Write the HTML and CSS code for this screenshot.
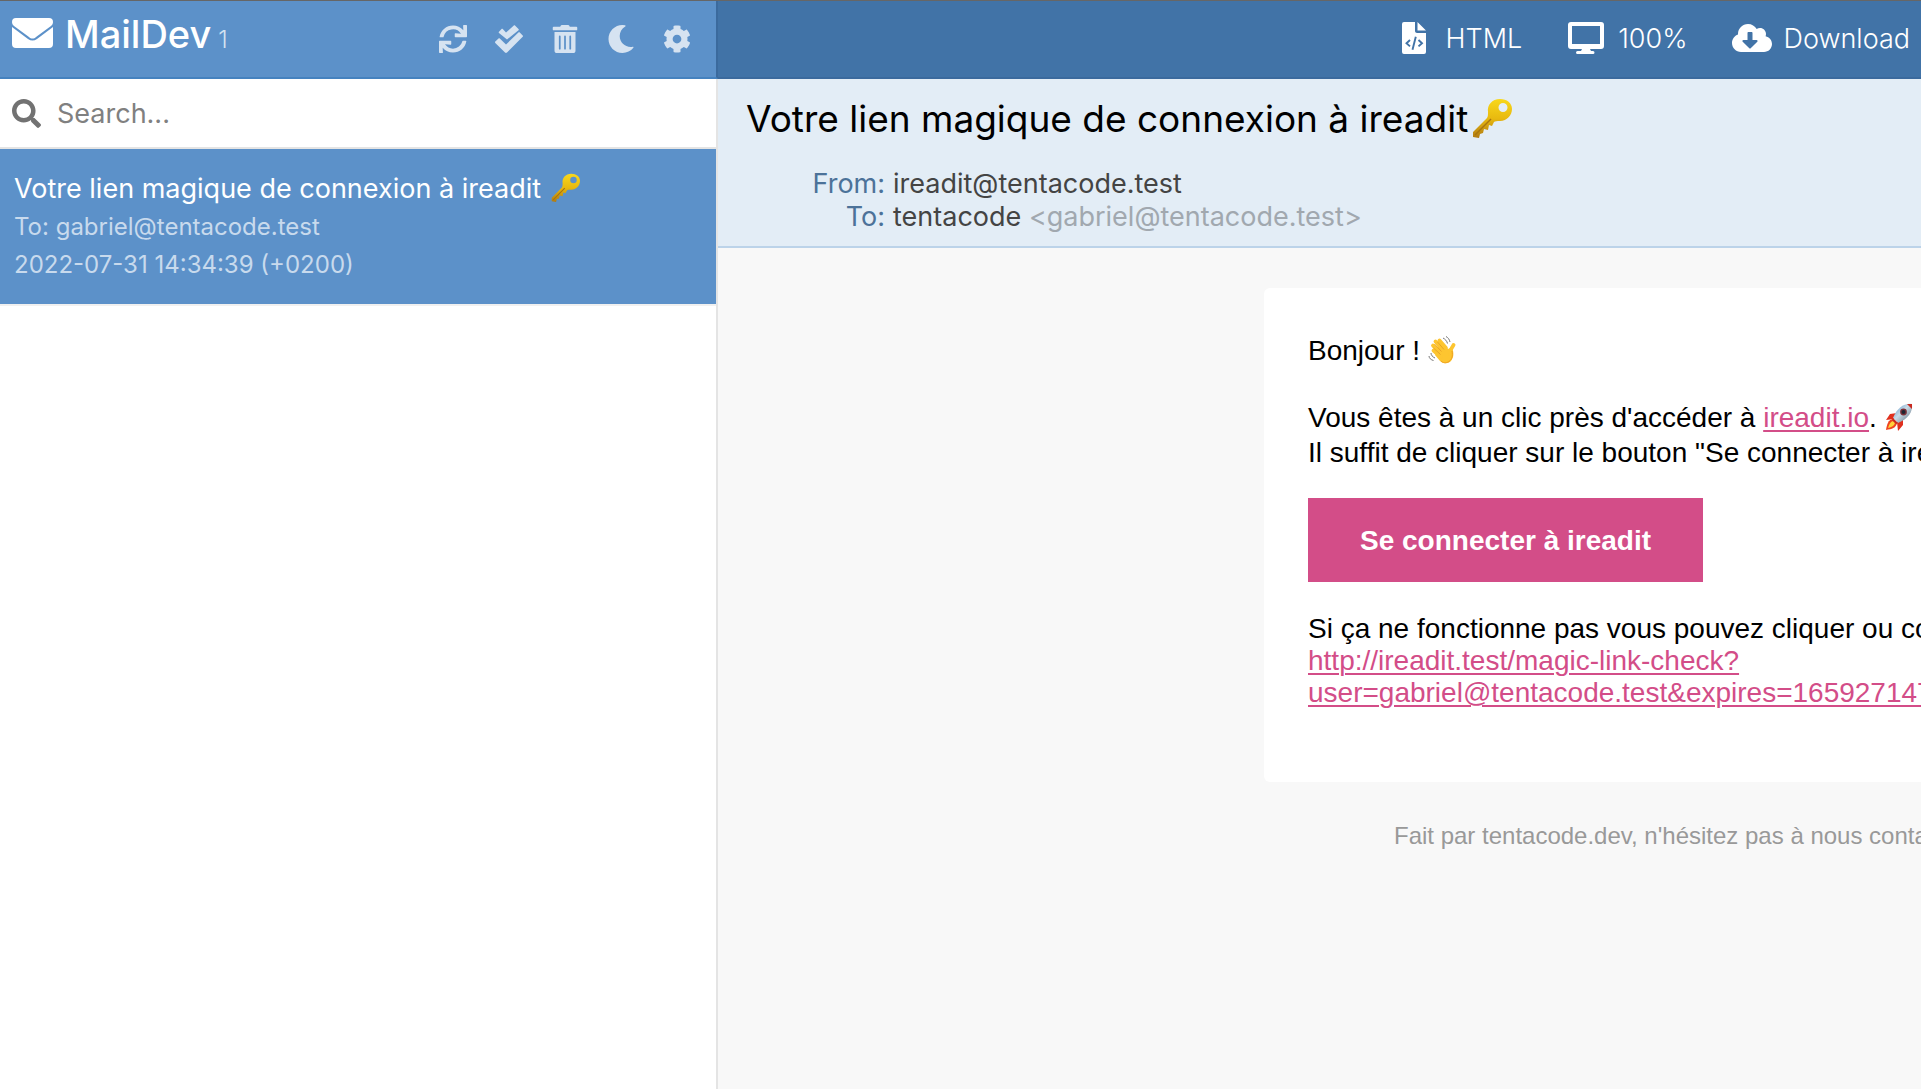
FILE: index.html
```html
<!DOCTYPE html>
<html lang="fr">
<head>
<meta charset="utf-8">
<title>MailDev</title>
<link rel="stylesheet" href="styles.css">
</head>
<body>
<svg class="sprite" aria-hidden="true">
  <defs>
    <linearGradient id="gold" x1="0" y1="0" x2="0" y2="1">
      <stop offset="0" stop-color="#f8d81c"/><stop offset="0.5" stop-color="#e8b90f"/><stop offset="1" stop-color="#b07a12"/>
    </linearGradient>
    <linearGradient id="hull" x1="0" y1="0" x2="1" y2="1">
      <stop offset="0" stop-color="#4d8fc4"/><stop offset="0.45" stop-color="#c9dbe8"/><stop offset="1" stop-color="#5a6b78"/>
    </linearGradient>
    <symbol id="key" viewBox="0 0 40 40">
      <path fill="url(#gold)" fill-rule="evenodd" d="M28 1C20 1 15 7 16 14c0 3 0 4-1 6L1 34v5l6 1 1-4 3-1 1-4 4 1 1-5 3 1 2-4c1-1 3-1 6-1 7 0 12-6 12-12S35 1 28 1zm3 4a4.500 4.500 0 1 1 0 9 4.500 4.500 0 0 1 0-9z"/>
      <path d="M3 37L19 21" fill="none" stroke="#a8740e" stroke-width="1.500"/>
    </symbol>
    <symbol id="wave" viewBox="0 0 28 28">
      <path fill="#fdc530" d="M10 11L20 13l4-2c2 6 2 10-1 14-3 3-8 3-11 0L7 19z"/>
      <g fill="none" stroke="#fdc530" stroke-width="3.800" stroke-linecap="round">
        <path d="M18 12L11.500 4.500M15 14L7.500 5.500M13 17L5 9.500M13 21L5.500 14.500"/>
        <path d="M22 18c-.5-4 1.500-5 3.500-9"/>
      </g>
      <path d="M16 13.500L9.500 6M13.500 15.500L6.500 8M12.500 18.500L5.500 12" fill="none" stroke="#df9722" stroke-width="0.700"/>
      <path d="M24 15c1 5 0 8-3 10.500-3 2-6 1.500-8-.5" fill="none" stroke="#eda023" stroke-width="1"/>
      <path d="M15 2c2 1 4 3 4.500 5.500M18 .5c2 1 3.500 3 4 5.500M1 20c0 2 2 4 4.500 4.500M3 17c0 2 1.500 4 4 5" fill="none" stroke="#777" stroke-width="1"/>
    </symbol>
    <symbol id="rocket" viewBox="0 0 28 28">
      <path fill="#e0301e" d="M12 10L5 11 1 17l8-1zM18 16l0 6-5 6-1-9z"/>
      <path fill="#f0441f" d="M8 16c-5 1-6 5-7 11 6-1 10-2 11-7z"/>
      <path fill="#ffd23a" d="M8 18c-3 1-4 4-5 7 4-1 6-2 7-5z"/>
      <path fill="url(#hull)" d="M27 1c-8-1-15 4-19 14l5 5C23 16 28 9 27 1z"/>
      <path fill="#c92a20" d="M27 1l-5 0 5 5zM8 15l5 5-2 1-4-4z"/>
      <circle cx="18.500" cy="9" r="3.400" fill="#7a3038"/><circle cx="18.500" cy="9" r="2" fill="#1d2430"/>
    </symbol>
  </defs>
</svg>
<div class="app">
  <aside class="sidebar">
    <header class="sidebar-header">
      <h1 class="brand">
        <svg class="brand-icon" viewBox="0 0 41 30" aria-hidden="true"><path fill="currentColor" d="M4 0h33a4 4 0 0 1 4 4c0 2-1 3-2 4L24 19c-2 2-5 2-7 0L2 8C1 7 0 6 0 4a4 4 0 0 1 4-4zM0 9l16 12c3 2 6 2 9 0L41 9v17a4 4 0 0 1-4 4H4a4 4 0 0 1-4-4z"/></svg>
        <span>MailDev</span>
        <span class="count">1</span>
      </h1>
      <nav class="tools">
        <button class="tool" aria-label="Refresh"><svg viewBox="0 0 512 512"><path d="M440.650 12.570l4 82.770A247.160 247.160 0 0 0 255.830 8C134.730 8 33.910 94.920 12.290 209.820A12 12 0 0 0 24.090 224h49.050a12 12 0 0 0 11.670-9.260 175.910 175.910 0 0 1 317-56.940l-101.460-4.860a12 12 0 0 0-12.570 12v47.410a12 12 0 0 0 12 12H500a12 12 0 0 0 12-12V12a12 12 0 0 0-12-12h-47.370a12 12 0 0 0-11.980 12.570zM255.830 432a175.610 175.610 0 0 1-146-77.800l101.800 4.870a12 12 0 0 0 12.570-12v-47.400a12 12 0 0 0-12-12H12a12 12 0 0 0-12 12V500a12 12 0 0 0 12 12h47.350a12 12 0 0 0 12-12.600l-4.150-82.570A247.170 247.170 0 0 0 255.830 504c121.110 0 221.930-86.920 243.550-201.820a12 12 0 0 0-11.800-14.180h-49.050a12 12 0 0 0-11.670 9.260A175.860 175.860 0 0 1 255.830 432z"/></svg></button>
        <button class="tool" aria-label="Mark all as read"><svg viewBox="0 0 28 28"><path d="M20 .5l3.500 3.500c.4.400.4.900 0 1.300L12 14.500 4 8c-.4-.4-.4-.8 0-1.200L6.500 4c.4-.4.900-.4 1.300 0L11 7.500 18.800.5c.4-.4.800-.4 1.200 0zM24.800 7.500L27.700 10.500c.4.400.4.900 0 1.300L12 27.500c-.7.600-1.400.6-2 0L.3 18c-.4-.5-.4-1 0-1.400L3.500 13.500c.4-.4.900-.4 1.300 0L11 19.500 23.400 7.500c.5-.4 1-.4 1.400 0z"/></svg></button>
        <button class="tool" aria-label="Delete all"><svg viewBox="-32 0 512 512"><path d="M32 464a48 48 0 0 0 48 48h288a48 48 0 0 0 48-48V128H32zm272-256a16 16 0 0 1 32 0v224a16 16 0 0 1-32 0zm-96 0a16 16 0 0 1 32 0v224a16 16 0 0 1-32 0zm-96 0a16 16 0 0 1 32 0v224a16 16 0 0 1-32 0zM432 32H312l-9.400-18.700A24 24 0 0 0 281.100 0H166.800a23.720 23.720 0 0 0-21.400 13.300L136 32H16A16 16 0 0 0 0 48v32a16 16 0 0 0 16 16h416a16 16 0 0 0 16-16V48a16 16 0 0 0-16-16z"/></svg></button>
        <button class="tool" aria-label="Dark mode"><svg viewBox="0 0 512 512"><path d="M283.211 512c78.962 0 151.079-35.925 198.857-94.792 7.068-8.708-.639-21.430-11.562-19.350-124.203 23.654-238.262-71.576-238.262-196.954 0-72.222 38.662-138.635 101.498-174.394 9.686-5.512 7.250-20.197-3.756-22.230A258.156 258.156 0 0 0 283.211 0c-141.309 0-256 114.511-256 256 0 141.309 114.511 256 256 256z"/></svg></button>
        <button class="tool" aria-label="Settings"><svg viewBox="0 0 512 512"><path d="M487.400 315.700l-42.600-24.600c4.300-23.200 4.300-47 0-70.200l42.600-24.600c4.900-2.800 7.100-8.600 5.500-14-11.100-35.600-30-67.800-54.700-94.600-3.800-4.100-10-5.100-14.800-2.300L380.800 110c-17.900-15.400-38.500-27.300-60.800-35.100V25.800c0-5.600-3.900-10.500-9.400-11.700-36.700-8.200-74.300-7.800-109.200 0-5.500 1.200-9.400 6.100-9.400 11.700V75c-22.200 7.900-42.800 19.800-60.800 35.100L88.700 85.500c-4.900-2.800-11-1.900-14.800 2.300-24.700 26.700-43.600 58.900-54.700 94.600-1.700 5.400.6 11.200 5.500 14L67.300 221c-4.300 23.200-4.300 47 0 70.200l-42.600 24.600c-4.900 2.800-7.100 8.600-5.500 14 11.100 35.600 30 67.800 54.700 94.600 3.800 4.100 10 5.100 14.800 2.300l42.600-24.600c17.900 15.400 38.500 27.300 60.800 35.100v49.200c0 5.600 3.900 10.500 9.400 11.700 36.700 8.200 74.300 7.800 109.200 0 5.500-1.200 9.400-6.100 9.400-11.700v-49.200c22.200-7.900 42.800-19.800 60.800-35.100l42.600 24.600c4.900 2.800 11 1.900 14.800-2.300 24.700-26.700 43.600-58.900 54.700-94.600 1.500-5.500-.7-11.300-5.600-14.100zM256 336c-44.100 0-80-35.900-80-80s35.900-80 80-80 80 35.900 80 80-35.900 80-80 80z"/></svg></button>
      </nav>
    </header>
    <label class="search">
      <svg class="search-icon" viewBox="0 0 512 512" aria-hidden="true"><path fill="currentColor" d="M505 442.700L405.300 343c-4.500-4.500-10.600-7-17-7H372c27.600-35.300 44-79.700 44-128C416 93.100 322.900 0 208 0S0 93.100 0 208s93.100 208 208 208c48.300 0 92.700-16.400 128-44v16.300c0 6.400 2.500 12.500 7 17l99.700 99.700c9.400 9.400 24.600 9.400 33.900 0l28.300-28.300c9.400-9.400 9.400-24.600.1-34zM208 336c-70.700 0-128-57.200-128-128 0-70.700 57.200-128 128-128 70.700 0 128 57.200 128 128 0 70.700-57.200 128-128 128z"/></svg>
      <input class="search-input" type="text" placeholder="Search..." aria-label="Search">
    </label>
    <a class="mail" href="#message">
      <span class="mail-title">Votre lien magique de connexion à ireadit <svg class="mail-emoji" role="img" aria-label="key"><use href="#key"/></svg></span>
      <span class="mail-meta">To: gabriel@tentacode.test</span>
      <span class="mail-meta">2022-07-31 14:34:39 (+0200)</span>
    </a>
  </aside>
  <main class="main" id="message">
    <nav class="toolbar">
      <button class="action"><svg viewBox="0 0 40 32"><path fill="currentColor" fill-rule="evenodd" d="M10 0h11v9c0 1 1 2 2 2h9v19a2 2 0 0 1-2 2H10a2 2 0 0 1-2-2V2a2 2 0 0 1 2-2zM23.500 0L32 8.500h-8.500z"/><path d="M16 18l-3.500 3.200 3.500 3.200M24.500 18l3.500 3.200-3.500 3.200M21.800 14.800l-3.300 13" fill="none" stroke="#4173a7" stroke-width="1.900"/></svg>HTML</button>
      <button class="action"><svg viewBox="0 0 40 32"><path fill="currentColor" fill-rule="evenodd" d="M5 0h30a3 3 0 0 1 3 3v21a3 3 0 0 1-3 3H24l1 2h2a1.500 1.500 0 0 1 0 3H11.500a1.500 1.500 0 0 1 0-3H15l1-2H5a3 3 0 0 1-3-3V3a3 3 0 0 1 3-3zM6 4v18h28V4z"/></svg>100%</button>
      <button class="action"><svg viewBox="0 0 640 512"><path fill="currentColor" d="M537.600 226.600c4.100-10.700 6.400-22.400 6.400-34.600 0-53-43-96-96-96-19.700 0-38.100 6-53.300 16.200C367 64.200 315.300 32 256 32c-88.400 0-160 71.600-160 160 0 2.700.1 5.400.2 8.100C40.200 219.800 0 273.200 0 336c0 79.500 64.500 144 144 144h368c70.700 0 128-57.300 128-128 0-61.900-44-113.600-102.400-125.400zm-132.900 88.700L299.300 420.700c-6.200 6.200-16.400 6.200-22.600 0L171.300 315.300c-10.100-10.100-2.900-27.300 11.300-27.300H248V176c0-8.800 7.200-16 16-16h48c8.800 0 16 7.200 16 16v112h65.400c14.200 0 21.400 17.200 11.300 27.300z"/></svg>Download</button>
    </nav>
    <header class="message-header">
      <h2 class="subject">Votre lien magique de connexion à ireadit<svg class="subject-emoji" role="img" aria-label="key"><use href="#key"/></svg></h2>
      <dl class="fields">
        <dt>From:</dt><dd>ireadit@tentacode.test</dd>
        <dt>To:</dt><dd>tentacode <span class="address">&lt;gabriel@tentacode.test&gt;</span></dd>
      </dl>
    </header>
    <div class="message-body">
      <article class="card">
        <p class="greeting">Bonjour ! <svg class="emoji" role="img" aria-label="wave"><use href="#wave"/></svg></p>
        <p class="intro">Vous êtes à un clic près d'accéder à <a href="#ireadit">ireadit.io</a>. <svg class="emoji" role="img" aria-label="rocket"><use href="#rocket"/></svg><br>Il suffit de cliquer sur le bouton "Se connecter à ireadit".</p>
        <a class="cta" href="#connect">Se connecter à ireadit</a>
        <p class="fallback">Si ça ne fonctionne pas vous pouvez cliquer ou copier<br><a href="#check">http://ireadit.test/magic-link-check?<br>user=gabriel@tentacode.test&amp;expires=1659271479</a></p>
      </article>
      <footer class="credits">Fait par tentacode.dev, n'hésitez pas à nous contacter</footer>
    </div>
  </main>
</div>
</body>
</html>
```
FILE: styles.css
```css
* { box-sizing: border-box; }
body, h1, h2, p, dl, dd { margin: 0; }
body {
  font-family: Inter, "Liberation Sans", sans-serif;
  font-size: 27px;
  background: #fff;
}
button { border: 0; padding: 0; background: none; font: inherit; color: inherit; }
.sprite { position: absolute; width: 0; height: 0; }

.app {
  display: grid;
  grid-template-columns: 718px minmax(0, 1fr);
  min-height: 100vh;
  border-top: 1px solid #666;
}
.sidebar { border-right: 2px solid #e4e4e4; }
.sidebar-header {
  display: flex;
  justify-content: space-between;
  align-items: flex-start;
  height: 78px;
  margin-right: -2px;
  padding: 8px 11px 0 12px;
  background: #5c91c9;
  border-bottom: 2px solid #4582bf;
  border-right: 2px solid #3b6a9d;
  color: #fff;
}
.brand {
  display: flex;
  align-items: baseline;
  font-size: 38px;
  line-height: 50px;
  font-weight: 500;
}
.brand-icon { width: 41px; height: 30px; margin-right: 12px; }
.count { margin-left: 7px; font-size: 24px; font-weight: 300; color: #d3e2f1; }
.tools { display: flex; }
.tool { display: grid; place-items: center; width: 56px; height: 60px; color: #d6e3f1; }
.tool svg { width: 28px; height: 28px; fill: currentColor; }

.search {
  display: flex;
  align-items: center;
  gap: 16px;
  height: 70px;
  padding: 0 12px;
  border-bottom: 2px solid #e4e4e4;
}
.search-icon { width: 29px; height: 29px; color: #727272; }
.search-input { flex: 1; min-width: 0; border: 0; padding: 0; background: none; font: inherit; color: #222; }
.search-input::placeholder { color: #808080; opacity: 1; }

.mail {
  display: block;
  padding: 21px 14px 20px;
  background: #5c91c9;
  border-bottom: 2px solid #f0f0f0;
  color: #fff;
  text-decoration: none;
  white-space: nowrap;
}
.mail span { display: block; }
.mail-title { line-height: 38px; }
.mail-meta { font-size: 24px; line-height: 38px; color: #c8daed; }
.mail-emoji { width: 29px; height: 29px; margin-left: 2px; vertical-align: -4px; }

.main { display: flex; flex-direction: column; background: #f8f8f8; overflow: hidden; }
.toolbar {
  display: flex;
  justify-content: flex-end;
  gap: 44px;
  height: 78px;
  padding: 0 11px 2px 0;
  background: #4173a7;
  border-bottom: 2px solid #3b6a9d;
  color: #fff;
}
.action { display: flex; align-items: center; gap: 12px; font-weight: 300; }
.action svg { width: 40px; height: 32px; }

.message-header {
  padding: 15px 28px 13px;
  background: #e3edf6;
  border-bottom: 2px solid #bcd3e9;
  color: #000;
}
.subject { font-size: 37px; font-weight: 400; line-height: 50px; white-space: nowrap; }
.subject-emoji { width: 40px; height: 40px; margin-left: 4px; vertical-align: -6px; }
.fields {
  display: grid;
  grid-template-columns: 139px 1fr;
  column-gap: 8px;
  margin-top: 23px;
  line-height: 33px;
  color: #444;
}
.fields dt { text-align: right; color: #4c7299; }
.address { color: #a1a8af; }

.message-body {
  padding: 40px 0 40px 546px;
  font-family: "Liberation Sans", Arial, sans-serif;
  font-size: 28px;
  line-height: 32px;
  color: #000;
  white-space: nowrap;
}
.card { padding: 45px 0 73px 44px; background: #fff; border-radius: 6px 0 0 6px; overflow: hidden; }
.card a { color: #d34d88; text-decoration-thickness: 2px; text-underline-offset: 3px; }
.emoji { width: 28px; height: 28px; vertical-align: -4px; }
.intro { margin-top: 32px; line-height: 35px; }
.greeting { line-height: 35px; }
.card .cta {
  display: inline-block;
  margin: 28px 0 31px;
  padding: 27px 52px 25px;
  background: #d34d88;
  color: #fff;
  font-weight: 700;
  text-decoration: none;
}
.credits { padding: 38px 0 0 130px; font-size: 24px; color: #999; }
```
